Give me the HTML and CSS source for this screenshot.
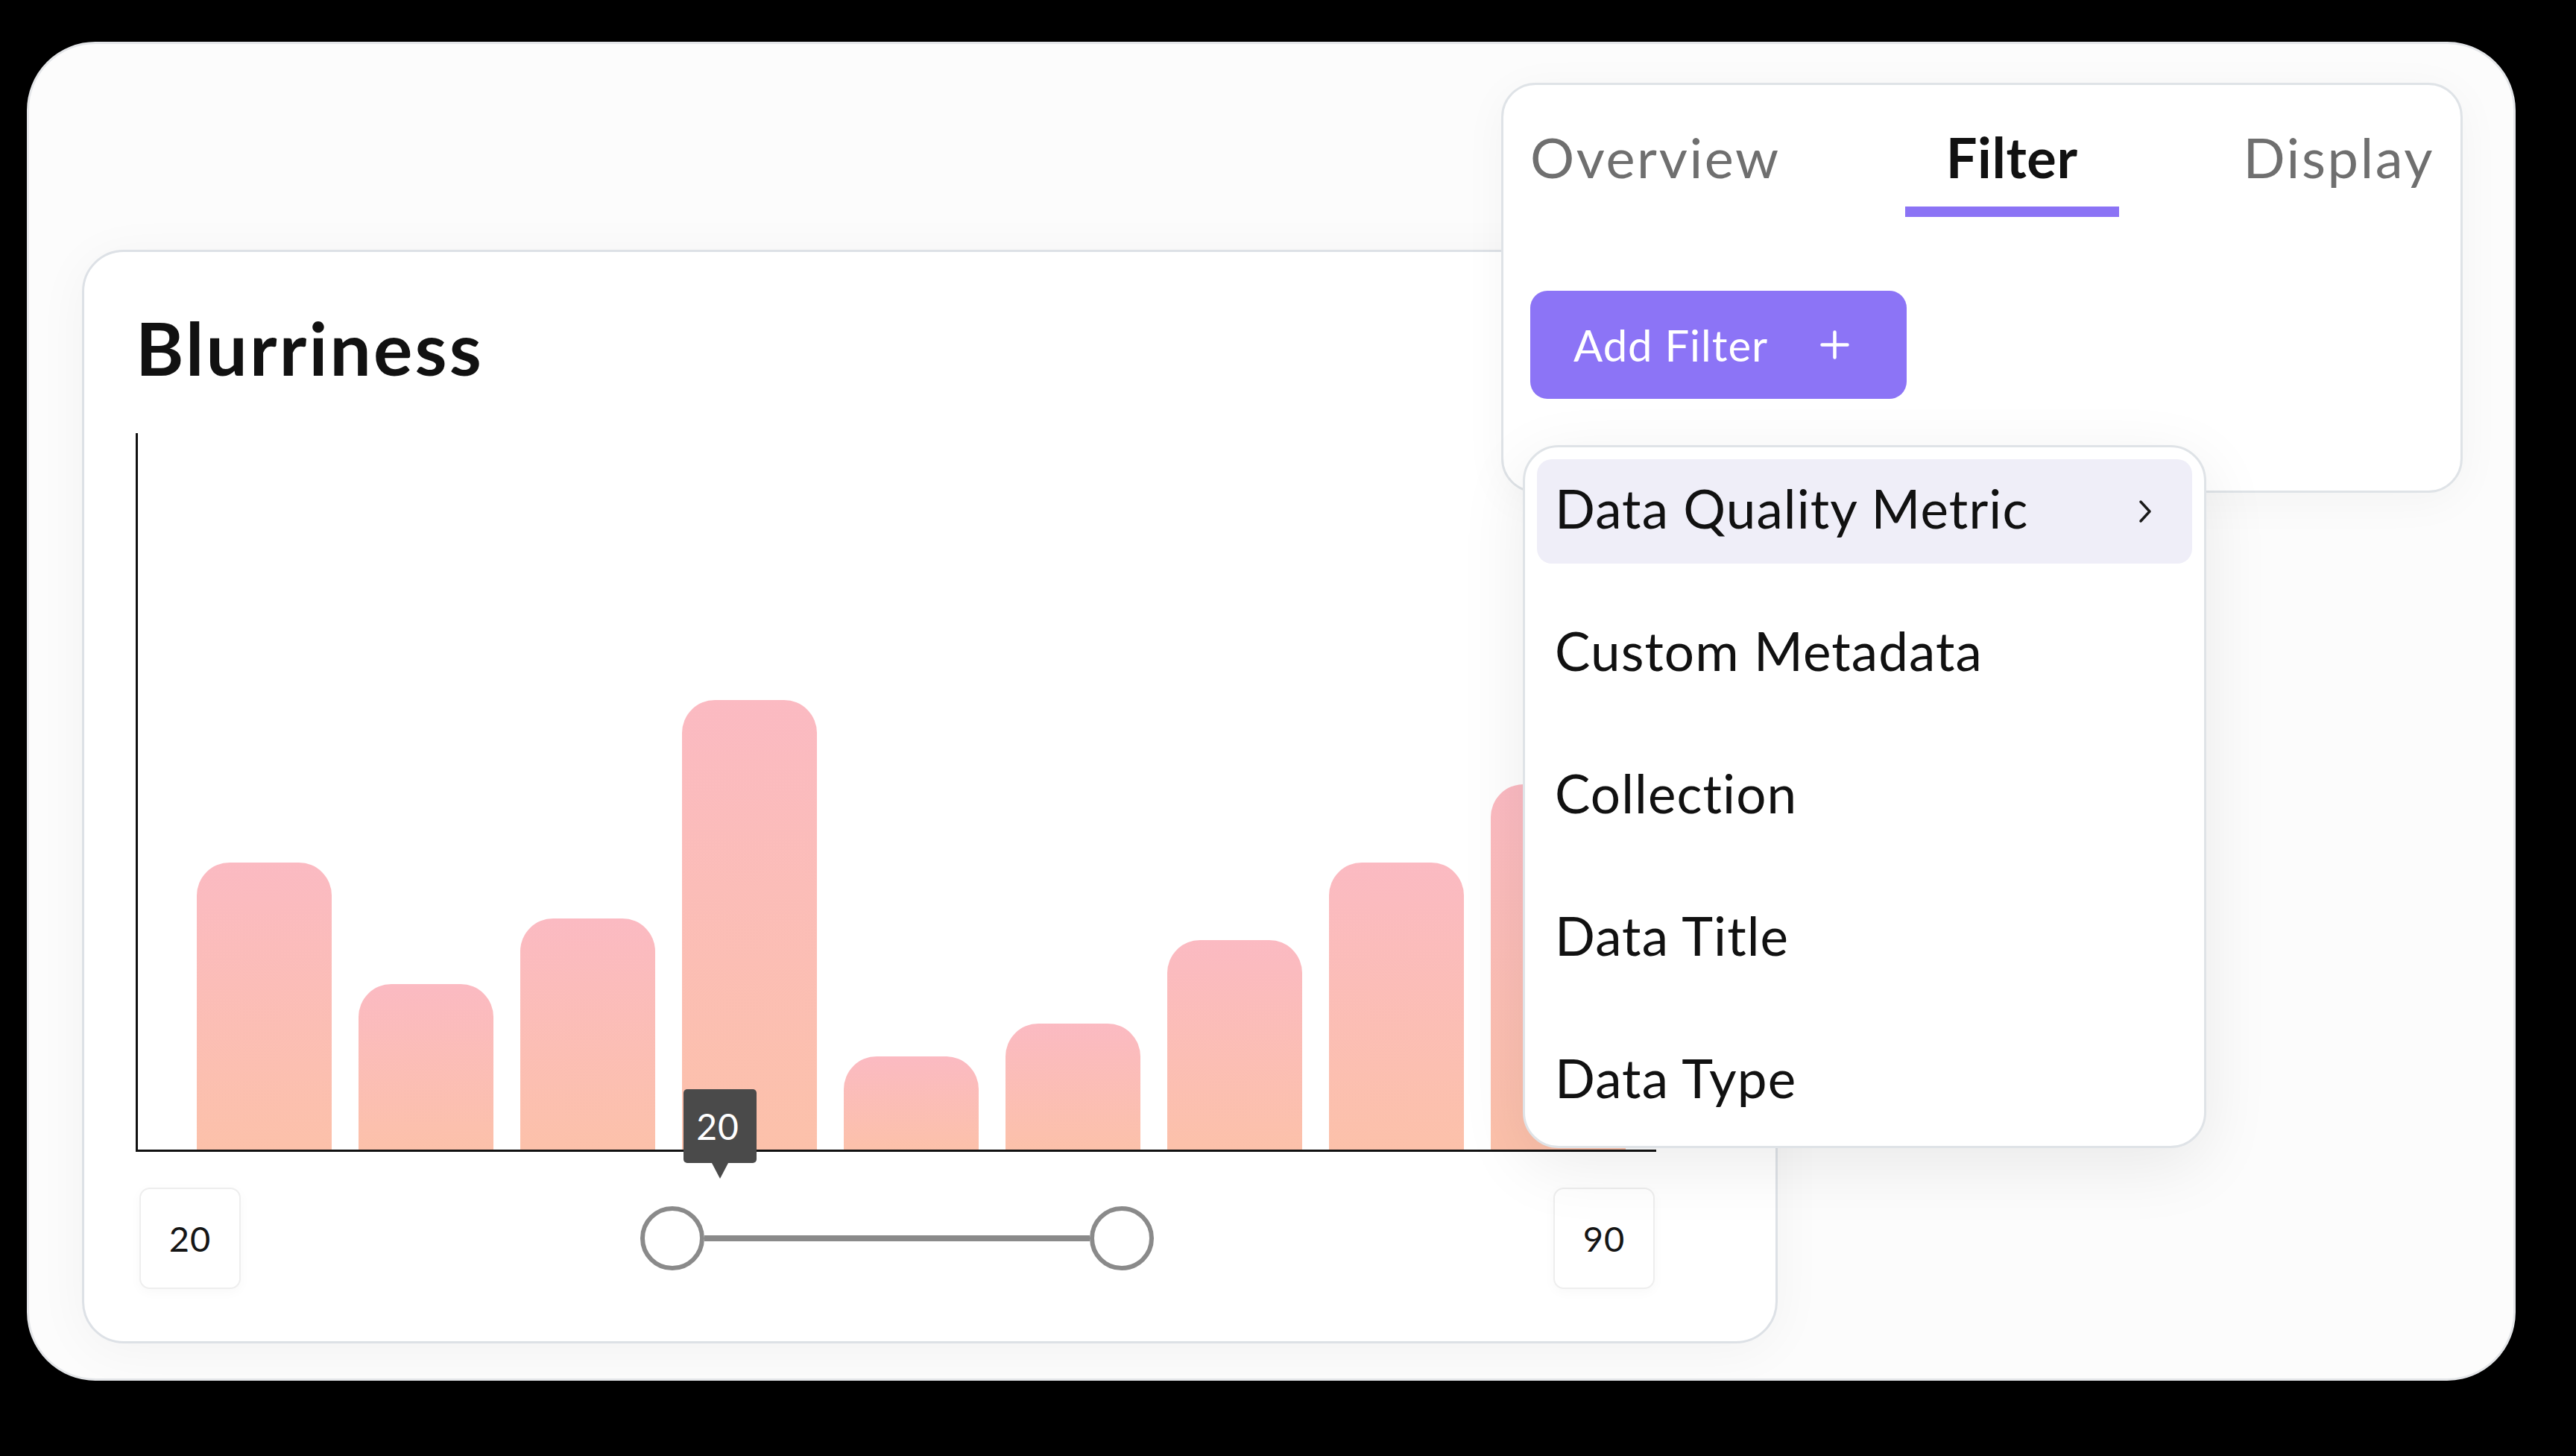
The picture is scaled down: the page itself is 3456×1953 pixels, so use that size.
FILE: index.html
```html
<!DOCTYPE html>
<html lang="en">
<head>
<meta charset="utf-8">
<title>Blurriness filter</title>
<link rel="stylesheet" href="styles.css">
</head>
<body>
<div class="frame">
  <section class="chart-card">
    <h1 class="title">Blurriness</h1>
    <div class="chart">
      <div class="bar" style="height:385px"></div>
      <div class="bar" style="height:222px"></div>
      <div class="bar" style="height:310px"></div>
      <div class="bar" style="height:603px"></div>
      <div class="bar" style="height:125px"></div>
      <div class="bar" style="height:169px"></div>
      <div class="bar" style="height:281px"></div>
      <div class="bar" style="height:385px"></div>
      <div class="bar" style="height:490px"></div>
    </div>
    <div class="range-row">
      <div class="value-box">20</div>
      <div class="slider">
        <span class="handle"></span>
        <span class="track"></span>
        <span class="handle"></span>
      </div>
      <div class="value-box">90</div>
    </div>
    <div class="tooltip">20</div>
  </section>

  <section class="filter-panel">
    <nav class="tabs">
      <span class="tab">Overview</span>
      <span class="tab active">Filter</span>
      <span class="tab">Display</span>
    </nav>
    <button class="add-btn" type="button">
      <span>Add Filter</span>
      <svg class="plus" width="39" height="39" viewBox="0 0 39 39"><path d="M19.5 2.5V36.5M2.5 19.5H36.5" stroke="#fff" stroke-width="4.5" stroke-linecap="round" fill="none"/></svg>
    </button>
  </section>

  <ul class="menu">
    <li class="menu-item active">
      <span>Data Quality Metric</span>
      <svg class="chev" width="20" height="32" viewBox="0 0 20 32"><path d="M4 3L16 16L4 29" stroke="#1a1a1a" stroke-width="3.5" stroke-linecap="round" stroke-linejoin="round" fill="none"/></svg>
    </li>
    <li class="menu-item"><span>Custom Metadata</span></li>
    <li class="menu-item"><span>Collection</span></li>
    <li class="menu-item"><span>Data Title</span></li>
    <li class="menu-item"><span>Data Type</span></li>
  </ul>
</div>
</body>
</html>
```

FILE: styles.css
```css
html, body {
  margin: 0;
  padding: 0;
  background: #000;
}

body {
  font-family: Lato, "Liberation Sans", sans-serif;
  font-variant-ligatures: none;
  padding-top: 56px;
  padding-left: 36px;
}

.frame {
  position: relative;
  box-sizing: border-box;
  width: 3339px;
  height: 1796px;
  border: 3px solid #e4e6e9;
  border-radius: 92px;
  background: #fcfcfc;
  overflow: hidden;
  padding: 276px 0 0 71px;
}

/* ---------- Chart card ---------- */
.chart-card {
  position: relative;
  box-sizing: border-box;
  width: 2275px;
  height: 1467px;
  border: 3px solid #dde1e6;
  border-radius: 56px;
  background: #fff;
  padding: 70px 160px 0 69px;
  box-shadow: 0 10px 70px rgba(0, 0, 0, 0.045);
}

.title {
  margin: 0;
  font-size: 98px;
  font-weight: 700;
  letter-spacing: 3.2px;
  line-height: 1.2;
  color: #111;
}

.chart {
  box-sizing: border-box;
  width: 2040px;
  height: 964px;
  margin-top: 55px;
  border-left: 3px solid #111;
  border-bottom: 3px solid #111;
  padding-left: 79px;
  display: flex;
  align-items: flex-end;
  gap: 36px;
}

.bar {
  flex: none;
  width: 181px;
  border-radius: 44px 44px 0 0;
  background: linear-gradient(180deg, #fbbac2 0%, #fcc1aa 100%);
}

.range-row {
  box-sizing: border-box;
  width: 2040px;
  margin-top: 48px;
  padding: 0 2px 0 5px;
  display: flex;
  align-items: center;
  justify-content: space-between;
}

.value-box {
  box-sizing: border-box;
  width: 136px;
  height: 136px;
  border: 2px solid #eeeeee;
  border-radius: 14px;
  background: #fff;
  box-shadow: 0 4px 16px rgba(0, 0, 0, 0.03);
  display: flex;
  align-items: center;
  justify-content: center;
  font-size: 47px;
  letter-spacing: 1px;
  color: #151515;
}

.slider {
  width: 689px;
  display: flex;
  align-items: center;
}

.handle {
  box-sizing: border-box;
  flex: none;
  width: 86px;
  height: 86px;
  border: 6px solid #8a8a8a;
  border-radius: 50%;
  background: #fff;
}

.track {
  flex: 1;
  height: 8px;
  background: #8a8a8a;
}

.tooltip {
  position: absolute;
  left: 804px;
  top: 1123px;
  box-sizing: border-box;
  width: 98px;
  height: 99px;
  padding-right: 6px;
  border-radius: 5px;
  background: #4a4a4a;
  color: #fff;
  font-size: 48px;
  letter-spacing: 1px;
  display: flex;
  align-items: center;
  justify-content: center;
}

.tooltip::after {
  content: "";
  position: absolute;
  left: 38px;
  top: 99px;
  border-left: 11px solid transparent;
  border-right: 11px solid transparent;
  border-top: 21px solid #4a4a4a;
}

/* ---------- Filter panel ---------- */
.filter-panel {
  position: absolute;
  left: 1975px;
  top: 52px;
  box-sizing: border-box;
  width: 1290px;
  height: 550px;
  border: 3px solid #dfe3e7;
  border-radius: 46px;
  background: #fff;
  padding: 53px 35px 0 36px;
  box-shadow: 0 10px 60px rgba(0, 0, 0, 0.04);
}

.tabs {
  display: flex;
  justify-content: space-between;
  align-items: flex-start;
}

.tab {
  font-size: 74px;
  line-height: 1.2;
  letter-spacing: 2.6px;
  color: #6f6f6f;
  padding-bottom: 21px;
  border-bottom: 14px solid transparent;
}

.tab.active {
  color: #111;
  font-weight: 700;
  letter-spacing: 0.6px;
  padding: 0 55px 21px;
  border-bottom-color: #8b73f5;
}

.add-btn {
  box-sizing: border-box;
  width: 505px;
  height: 145px;
  margin-top: 99px;
  padding: 0 77px 0 58px;
  border: none;
  border-radius: 23px;
  background: #8c74f6;
  color: #fff;
  font-family: inherit;
  font-size: 58px;
  letter-spacing: 1px;
  display: flex;
  align-items: center;
}

.plus {
  margin-left: auto;
  flex: none;
}

/* ---------- Dropdown menu ---------- */
.menu {
  position: absolute;
  left: 2004px;
  top: 538px;
  box-sizing: border-box;
  width: 917px;
  height: 943px;
  margin: 0;
  padding: 16px;
  list-style: none;
  border: 3px solid #dfe3e7;
  border-radius: 48px;
  background: #fff;
  box-shadow: 0 24px 90px rgba(0, 0, 0, 0.08);
  display: flex;
  flex-direction: column;
  gap: 51px;
}

.menu-item {
  box-sizing: border-box;
  height: 141px;
  padding: 0 53px 10px 24px;
  border-radius: 20px;
  font-size: 71px;
  line-height: 1.2;
  letter-spacing: 1.1px;
  color: #111;
  display: flex;
  align-items: center;
  justify-content: space-between;
}

.menu-item.active {
  background: #efeef8;
}

.chev {
  flex: none;
  margin-top: 10px;
}
```
